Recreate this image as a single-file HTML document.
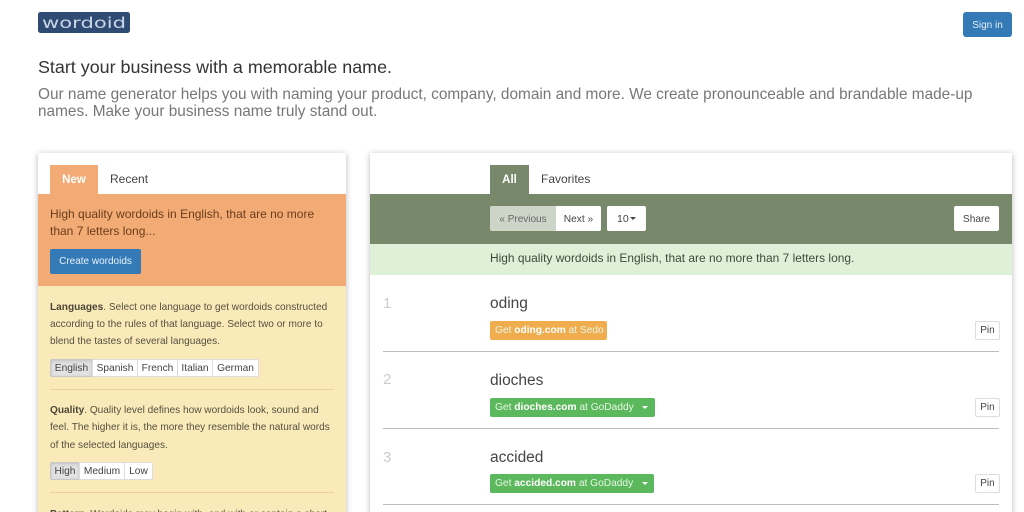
<!DOCTYPE html>
<html><head><meta charset="utf-8"><style>
html,body{margin:0;padding:0;background:#fff;width:1024px;height:512px;overflow:hidden;font-family:"Liberation Sans",sans-serif;color:#333}
#w{position:relative;width:1024px;height:512px;overflow:hidden;filter:blur(.3px)}
.a{position:absolute;white-space:nowrap}
.box{position:absolute;background:#fff;box-shadow:0 1px 6px rgba(0,0,0,.28)}
.b{position:absolute;box-sizing:border-box;background:#fff;border:1px solid #ddd;font-size:10.2px;line-height:17px;text-align:center;color:#444}
.on{background:#e2e2e2;border-color:#c8c8c8;box-shadow:inset 0 1px 3px rgba(0,0,0,.15)}
.y{font-size:10.1px;color:#54503f}
.y b{color:#4a4636}
.hr{position:absolute;height:1px;background:#f0cf9f;left:50px;width:284px}
.l{position:absolute;left:383px;width:616px;height:1px;background:#bbb}
.n{position:absolute;left:383px;font-size:15px;color:#ccc}
.w{position:absolute;left:490px;font-size:15.5px;color:#444}
.g{position:absolute;height:19px;border-radius:2px;color:#e8f5e4;font-size:10.2px;line-height:20px;box-sizing:border-box;padding-left:5px;white-space:nowrap}
.g b{color:#fff}
.c{position:absolute;width:0;height:0;border-left:3.5px solid transparent;border-right:3.5px solid transparent;border-top:3px solid #fff}
.p{position:absolute;left:975px;width:25px;height:19px;box-sizing:border-box;border:1px solid #ddd;border-radius:2px;background:#fff;font-size:10px;line-height:18px;text-align:center;color:#444}
</style></head><body><div id="w">
<svg class="a" style="left:38px;top:12px" width="93" height="21" viewBox="0 0 93 21"><rect width="92" height="21" rx="2.5" fill="#2f4a73"/><text x="4" y="16" font-family="DejaVu Sans" font-size="15" fill="#c9d6e6" textLength="84" lengthAdjust="spacingAndGlyphs">wordoid</text></svg>
<div class="a" style="left:963px;top:12px;width:49px;height:25px;background:#337ab7;border-radius:3px;color:#e8f1fa;font-size:10px;line-height:27px;text-align:center">Sign in</div>
<div class="a" style="left:38px;top:57px;font-size:17.9px;line-height:20px;color:#333">Start your business with a memorable name.</div>
<div class="a" style="left:38px;top:86px;font-size:15.38px;line-height:17px;color:#777">Our name generator helps you with naming your product, company, domain and more. We create pronounceable and brandable made-up<br>names. Make your business name truly stand out.</div>

<div class="box" style="left:38px;top:153px;width:308px;height:370px"></div>
<div class="a" style="left:50px;top:165px;width:48px;height:29px;background:#f2ab74;color:#fff;font-size:11.5px;font-weight:bold;line-height:30px;text-align:center">New</div>
<div class="a" style="left:110px;top:165px;font-size:12px;line-height:29px;color:#444">Recent</div>
<div class="a" style="left:38px;top:194px;width:308px;height:92px;background:#f2ab74"></div>
<div class="a" style="left:50px;top:205.5px;font-size:12px;line-height:17.5px;color:#6b3d1d">High quality wordoids in English, that are no more<br>than 7 letters long...</div>
<div class="a" style="left:50px;top:249px;width:91px;height:25px;background:#337ab7;border-radius:2px;color:#e8f1fa;font-size:10px;line-height:25px;text-align:center">Create wordoids</div>
<div class="a" style="left:38px;top:286px;width:308px;height:226px;background:#fbeab9"></div>
<div class="a y" style="left:50px;top:299px;line-height:17.2px"><b>Languages</b>. Select one language to get wordoids constructed<br>according to the rules of that language. Select two or more to<br>blend the tastes of several languages.</div>
<div class="b on" style="left:50px;top:359px;width:43px;height:18px;border-radius:2px 0 0 2px">English</div>
<div class="b" style="left:92px;top:359px;width:46px;height:18px">Spanish</div>
<div class="b" style="left:137px;top:359px;width:41px;height:18px">French</div>
<div class="b" style="left:177px;top:359px;width:36px;height:18px">Italian</div>
<div class="b" style="left:212px;top:359px;width:47px;height:18px;border-radius:0 2px 2px 0">German</div>
<div class="hr" style="top:389px"></div>
<div class="a y" style="left:50px;top:402px;line-height:17.4px"><b>Quality</b>. Quality level defines how wordoids look, sound and<br>feel. The higher it is, the more they resemble the natural words<br>of the selected languages.</div>
<div class="b on" style="left:50px;top:462px;width:30px;height:18px;border-radius:2px 0 0 2px">High</div>
<div class="b" style="left:79px;top:462px;width:46px;height:18px">Medium</div>
<div class="b" style="left:124px;top:462px;width:29px;height:18px;border-radius:0 2px 2px 0">Low</div>
<div class="hr" style="top:492px"></div>
<div class="a y" style="left:50px;top:506px;line-height:17px"><b>Pattern</b>. Wordoids may begin with, end with or contain a short</div>

<div class="box" style="left:370px;top:153px;width:642px;height:370px"></div>
<div class="a" style="left:490px;top:165px;width:39px;height:29px;background:#77896a;color:#fff;font-size:11.5px;font-weight:bold;line-height:30px;text-align:center">All</div>
<div class="a" style="left:541px;top:165px;font-size:12px;line-height:29px;color:#444">Favorites</div>
<div class="a" style="left:370px;top:194px;width:642px;height:50px;background:#77896a"></div>
<div class="a" style="left:490px;top:206px;width:66px;height:25px;background:#cdd5c8;border-radius:2px 0 0 2px;color:#666;font-size:10px;line-height:27px;text-align:center">« Previous</div>
<div class="a" style="left:556px;top:206px;width:45px;height:25px;background:#fff;border-radius:0 2px 2px 0;color:#444;font-size:10.2px;line-height:27px;text-align:center">Next »</div>
<div class="a" style="left:607px;top:206px;width:39px;height:25px;background:#fff;border-radius:2px;color:#444;font-size:10.5px;line-height:26px;padding-left:10px;box-sizing:border-box">10</div>
<div class="c" style="left:630px;top:217px;border-top-color:#444"></div>
<div class="a" style="left:954px;top:206px;width:45px;height:25px;background:#fff;border-radius:2px;color:#444;font-size:10.2px;line-height:27px;text-align:center">Share</div>
<div class="a" style="left:370px;top:244px;width:642px;height:31px;background:#dff0d8"></div>
<div class="a" style="left:490px;top:250px;font-size:11.95px;line-height:16px;color:#3d4a38">High quality wordoids in English, that are no more than 7 letters long.</div>

<div class="n" style="top:295px">1</div>
<div class="w" style="top:295px">oding</div>
<div class="g" style="left:490px;top:321px;width:117px;background:#f0ad4e">Get <b>oding.com</b> at Sedo</div>
<div class="p" style="top:321px">Pin</div>
<div class="l" style="top:351px"></div>

<div class="n" style="top:371px">2</div>
<div class="w" style="top:372px">dioches</div>
<div class="g" style="left:490px;top:398px;width:165px;background:#5cb85c">Get <b>dioches.com</b> at GoDaddy</div>
<div class="c" style="left:642px;top:406px"></div>
<div class="p" style="top:398px">Pin</div>
<div class="l" style="top:428px"></div>

<div class="n" style="top:449px">3</div>
<div class="w" style="top:449px">accided</div>
<div class="g" style="left:490px;top:474px;width:164px;background:#5cb85c">Get <b>accided.com</b> at GoDaddy</div>
<div class="c" style="left:642px;top:482px"></div>
<div class="p" style="top:474px">Pin</div>
<div class="l" style="top:504px"></div>
</div></body></html>
